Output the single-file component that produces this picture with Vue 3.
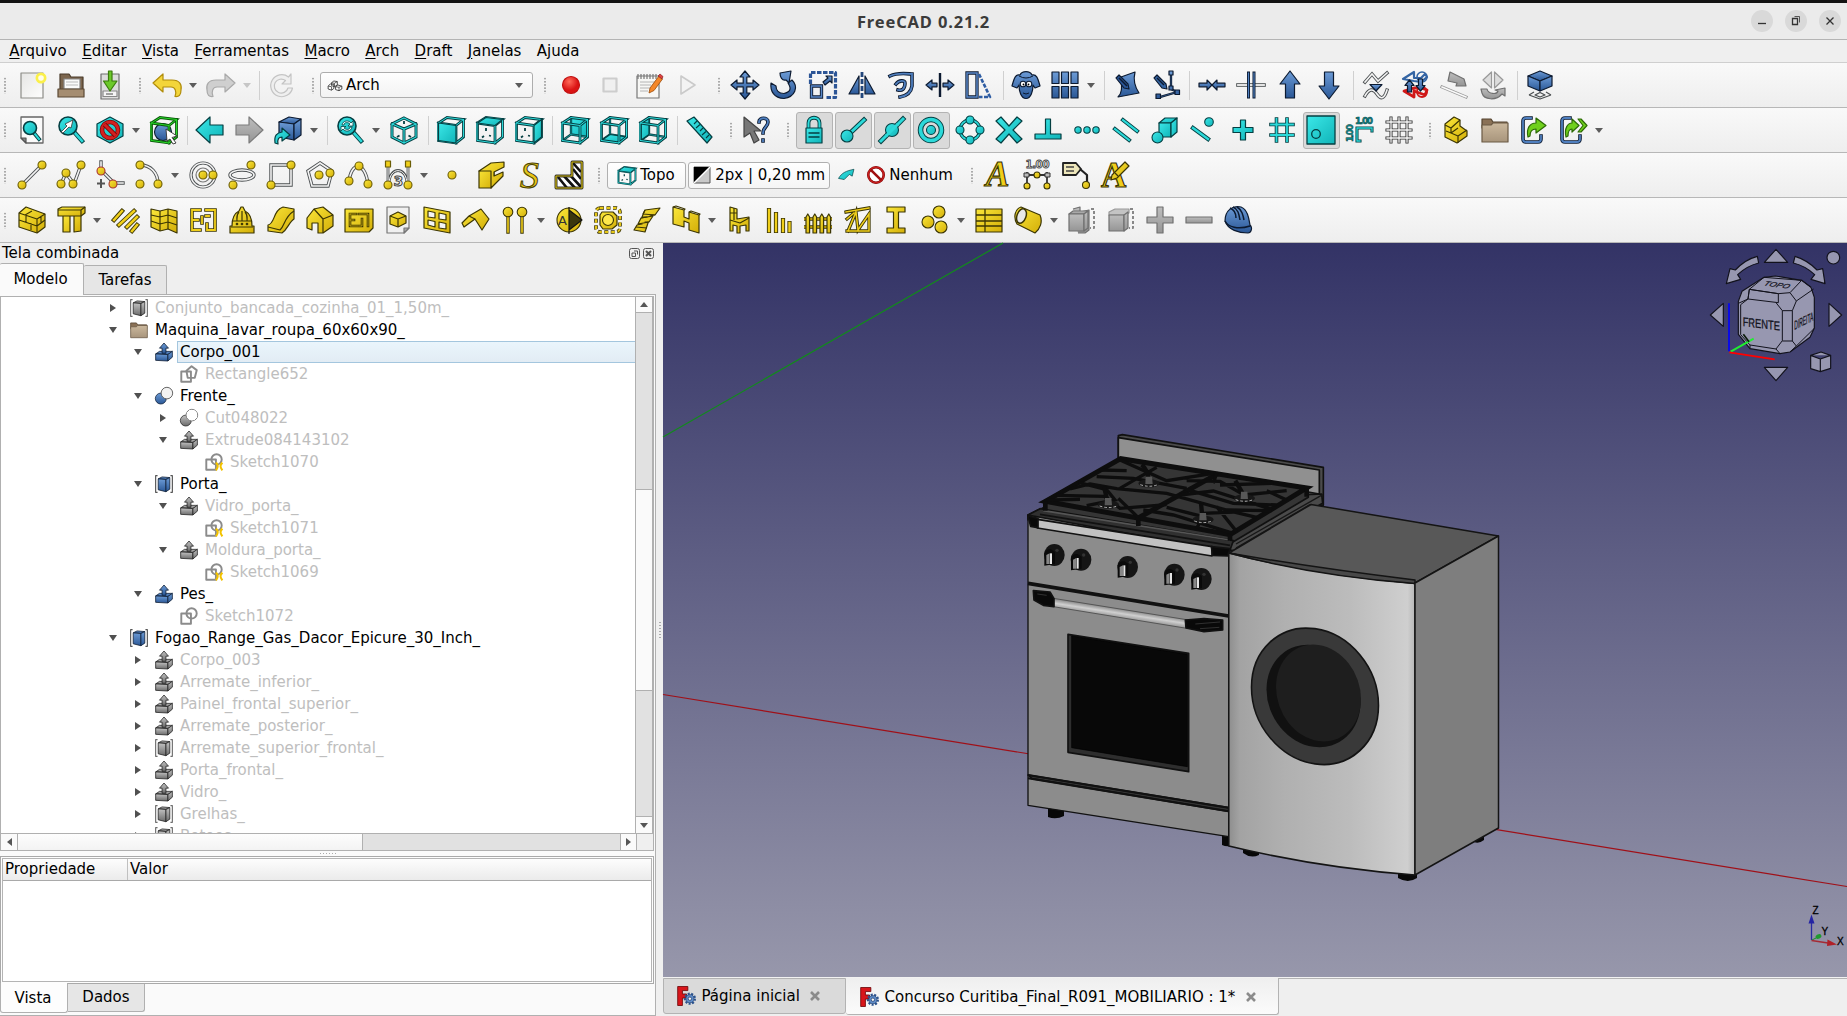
<script setup>
const p = (d, fill = 'none', stroke = 'none', w = 1.2) =>
  `<path d="${d}" fill="${fill}" stroke="${stroke}" stroke-width="${w}" stroke-linejoin="round"/>`
const tube = (d, c, o, w = 1.8) =>
  `<path d="${d}" fill="none" stroke="${o}" stroke-width="${w + 1.8}" stroke-linecap="square"/><path d="${d}" fill="none" stroke="${c}" stroke-width="${w}" stroke-linecap="square"/>`
const c = (x, y, r, fill, stroke, w = 1.1) =>
  `<circle cx="${x}" cy="${y}" r="${r}" fill="${fill}" stroke="${stroke}" stroke-width="${w}"/>`
const TS = '#053f42', YS = '#3c3604', BS = '#0c1a30', GS = '#707070'
const t = (d) => p(d, 'url(#gt)', TS)
const y = (d) => p(d, 'url(#gy)', YS)
const b = (d) => p(d, 'url(#gb)', BS)
const g = (d) => p(d, 'url(#gg)', GS)
const tt = (d, w) => tube(d, '#2bd9d9', TS, w)
const wt = (d, w = 1.6) => tube(d, '#f4f4f4', '#4c5052', w)
const yn = (...pts) => pts.map(([a, e]) => c(a, e, 4, 'url(#gy)', '#6b5d05')).join('')
const txt = (s, x, yy, size, fill, extra = '') =>
  `<text x="${x}" y="${yy}" font-size="${size}" fill="${fill}" ${extra}>${s}</text>`

const FRONT = 'M1.5 7L19 9.5V27L1.5 24.5Z', TOP = 'M1.5 7L10 1.5L26.5 3.5L19 9.5Z', RIGHT = 'M19 9.5L26.5 3.5V21L19 27Z'
const BACK = 'M10 1.5L26.5 3.5V21L10 18.5Z', BOT = 'M1.5 24.5L10 18.5L26.5 21L19 27Z', LEFT = 'M1.5 7L10 1.5V18.5L1.5 24.5Z'
const WIRE = 'M1.5 7L19 9.5V27L1.5 24.5ZM1.5 7L10 1.5L26.5 3.5L19 9.5M26.5 3.5V21L19 27'
const ticks = p('M10 12v3M8 20l-2 1.500M13 19.500l2 .5', 'none', TS, 1.8)
const hidden = tt('M10 1.5V18.5L1.5 24.5M10 18.5L26.5 21', 0.5)
const dash = (s, d) => s.replace('/>', ` stroke-dasharray="${d}"/>`)
const pencil = (x, yy, col, st) => p(`M${x} ${yy}l3-3 9 9 1 5-5-1z`, col, st)

const icons = {
  new: p('M3 2H25V27H3Z', 'url(#gw)', '#8d8d88') + c(23, 7, 5.500, '#fbf04a', 'none') + c(23, 7, 2.800, '#fffde8', 'none'),
  open: p('M3 3H12L14 6H26V20H3Z', '#7b654d', '#4a3b2a') + p('M7 8H23V18H7Z', '#fafafa', '#888') + p('M9 11H21M9 14H21', 'none', '#bbb', 1) + p('M1 18H27V26H1Z', '#a58d71', '#5b4934'),
  save: p('M5 3H23V28H5Z', '#dcdcdc', '#6e6e6e') + p('M7 20H21V25.500H7Z', '#f4f4f4', '#888') + p('M10 23H17', 'none', '#666') + p('M12.500 0H16V10H21L14 20L7.500 10H12.500Z', '#6cc92a', '#3b7d0d'),
  undo: p('M0 12L10 3V9H19C27 9 29 14 28 19C28 24 26 26 22 25.500C24 20 22 16 18 16H10V21Z', '#f3d53a', '#b08c0a'),
  redo: p('M28 12L18 3V9H9C1 9-1 14 0 19C0 24 2 26 6 25.500C4 20 6 16 10 16H18V21Z', '#cfcfcf', '#a9a9a9'),
  refresh: p('M23 3V13H14L17.500 9.500A7 7 0 1 0 20 17H24.500A11 11 0 1 1 20.500 6Z', '#efefef', '#c4c4c4'),
  record: c(14, 14, 8.500, 'url(#gr)', '#c01010'),
  stop: p('M7.500 7.500H20.500V20.500H7.500Z', '#f0f0f0', '#cdcdcd', 2.200),
  macro: p('M2 5H24V27H2Z', '#f7f7f5', '#777') + p('M3 3V8M6 3V8M9 3V8M12 3V8M15 3V8M18 3V8M21 3V8', 'none', '#777', 1.200) + p('M5 11H20M5 14H16M5 17H15M5 20H13', 'none', '#b4b4b4', 1) + p('M15 17L24 5L27.500 8L19 19.500L14 22Z', '#f4872a', '#9a4a08', .8) + p('M23 5L25 3L28 5.500L27 8Z', '#e04040', '#822', .7),
  play: p('M7 5L21 14L7 23Z', '#f3f3f3', '#cacaca', 1.600),
  move: b('M14 0L19 6H15.800V12.200H22V9L28 14L22 19V15.800H15.800V22H19L14 28L9 22H12.200V15.800H6V19L0 14L6 9V12.200H12.200V6H9Z'),
  rotate: b('M10 2L21 0L19 12L16 9C12 10 10 6 10 2ZM22 9C29 16 25 26 14 27.500C4 27 0 20 1 12L6 15C6 20 9 22.500 14 22.500C20 21 22 18 18 12Z'),
  scale: dash(p('M1.500 13V1.500H26.500V26.500H16', 'none', '#2c5596', 3.200), '4.500 1.500') + tube('M2.500 15H12.500V26H2.500Z', '#5a88c8', BS, 1.500) + b('M14 11L19 7L17 5H23V12L21 10L16 14Z'),
  mirror: b('M11 5V23H1Z') + b('M17 5V23H27Z') + dash(p('M14 1V27', 'none', '#23477c', 2.800), '5 2'),
  offset: tube('M3 5C11 1 22 3 25 3V15C24 22 19 25 13 26M9 13C12 9 18 9 18 12C18 18 15 20 11 19', '#4f7fbf', BS, 1.800),
  trimex: p('M14 2V26', 'none', BS, 2.400) + b('M0 14L6 9V12.200H11V15.800H6V19ZM28 14L22 9V12.200H17V15.800H22V19Z'),
  stretch: tube('M2 2H12V26H2Z', '#5a88c8', BS, 1.500) + dash(p('M14 3L25 26H14', 'none', '#2d5ca3', 2.600), '4 1.500'),
  sheep: b('M8 4C3 3 2 8 0 15L5 17L7 14C7 20 9 27.500 14 27.500C19 27.500 21 20 21 14L23 17L28 15C26 8 25 3 20 4C18-.5 10-.5 8 4Z') + c(11, 13, 2.800, '#fff', BS) + c(17, 13, 2.800, '#fff', BS) + c(11.500, 13.500, .9, '#000', 'none') + c(16.500, 13.500, .9, '#000', 'none') + p('M11 22Q14 24 17 22M7 5Q14 9 21 5', 'none', BS, 1),
  array: [1, 10.500, 20].map((x) => b(`M${x} 1h7v11.500h-7zM${x} 15.500h7v11.500h-7z`)).join(''),
  dedit: b('M8 6L22 1C20 9 22 16 26 22L5 26C9 22 9 18 8 6Z') + pencil(3, 7, '#2a5596', BS) + p('M6 7l8 8', 'none', BS, 1.600),
  dsub: tube('M19 4V18L25 21L8 26', '#4f7fbf', BS, .5) + pencil(2, 7, '#3465a4', BS) + p('M5 7l7 7', 'none', BS, 1.400) + b('M17 0h4v4h-4zM17 15h4v4h-4zM23 19h4.500v4.500h-4.500zM4 23h4.500v4.500h-4.500z'),
  join: b('M9 9L14 14L9 19V15.800H1V12.200H9ZM19 9L14 14L19 19V15.800H27V12.200H19Z'),
  split: wt('M1 14H27', 1.800) + tube('M11.500 2V26M17 2V26', '#4f7fbf', BS, 1.200),
  up: b('M14 0L24 13H18.500V27H9.500V13H4Z'),
  down: b('M14 28L24 15H18.500V1H9.500V15H4Z'),
  w2d: wt('M3 11L10 3L16 10L25 2M3 25Q9 14 15 23T25 19') + b('M8 13.500H20L14 20Z'),
  shape2d: p('M2 8L13 1V7H20L24 3L26 6L20 11L13 10Z', 'none', '#3465a4', 2.200) + p('M3 20L13 26V20L24 24L26 19L20 17H13Z', 'none', '#d01818', 2.800) + c(21, 6, 5, 'none', '#3465a4', 1.600) + c(21, 21, 5, 'none', '#d01818', 1.800) + b('M8.500 9L13 14.500H10.500V21H6.500V14.500H4ZM19.500 20L24 14.500H21.500V8H17.500V14.500H15Z'),
  slope: g('M10 1L24 8L26 15L16 15L17 12L8 10Z') + tube('M2 16L26 26', '#fafafa', '#999', 1.400),
  flip: p('M12.500 1V17L4 9ZM15.500 1V17L24 9Z', '#dcdcdc', '#999') + g('M2 18H8C9 23 18 24 19 20L16 19L26 17V25L23 23C17 30 5 29 3 22Z'),
  wproxy: b('M2 5L14 0L26 5L14 10Z') + b('M2 5L14 10V20L2 15Z') + b('M14 10L26 5V15L14 20Z') + p('M3 24L8 21M25 24L20 21M3 24L14 28L25 24M9 24L14 21.500L19 24L14 26Z', 'none', '#4c5052', 1.200),
  fitall: p('M3 1H25V27H8L3 22Z', '#fafafa', '#666', 1.300) + p('M3 22H8V27Z', '#888', '#555') + tt('M16 17L21 23', 2) + c(12, 12, 6.500, 'url(#gt)', TS, 1.600),
  fitsel: tt('M18 17L25 25', 2.600) + c(11, 10, 9, 'url(#gt)', TS, 1.600) + p('M4 16L10 10L8 8L16 4L14 12L12 11L6 17Z', '#fff', '#333', .8),
  nodraw: t('M14 1L27 8V20L14 27L1 20V8Z') + c(14, 14, 8, 'none', '#7a0808', 4.600) + c(14, 14, 8, 'none', '#d42020', 3) + p('M8.500 8.500L19.500 19.500', 'none', '#7a0808', 4.600) + p('M8.500 8.500L19.500 19.500', 'none', '#d42020', 3),
  selbox: c(13, 16, 8.500, 'url(#gb)', BS) + tube(WIRE, '#28d828', '#0a5a0a', 1) + p('M16 13L27 20L22 21.500L26 27L23 28L20 23L17 25Z', '#fff', '#333', .9),
  left: t('M0 14L14 1V9H27V19H14V27Z'),
  right: p('M28 14L14 1V9H1V19H14V27Z', 'url(#gg)', '#7c7c7c'),
  link: b('M5 6L15 1L27 3L20 8Z') + b('M5 6L20 8V24L5 21Z') + b('M20 8L27 3V19L20 24Z') + t('M1 27C0 19 3 17 8 16V12L16 19L8 25V21C5 21 3 23 4 28Z'),
  zoom: tt('M18 17L25 25', 2.600) + c(11, 10, 9, 'url(#gt)', TS, 1.600) + p('M6 9C7 4 13 4 15 7L17 5V10H12L14 8C12 6 8 6 8 9ZM16 11C15 16 9 16 7 13L5 15V10.500H10L8 12C10 14 14 14 14 11Z', '#e9ffff', TS, .8),
  iso: tt('M14 2L26 8V21L14 27L2 21V8ZM2 8L14 13L26 8M14 13V27', 1.200) + p('M14 5V8M7 21l2.500-1.500M21 21l-2.500-1.500', 'none', TS, 1.800),
  vfront: tt(WIRE, 1) + t(FRONT), vtop: tt(WIRE, 1) + t(TOP) + ticks, vright: tt(WIRE, 1) + t(RIGHT) + ticks,
  vrear: t(BACK) + hidden + tt(WIRE, 1), vbottom: hidden + t(BOT) + tt(WIRE, 1), vleft: hidden + t(LEFT) + tt(WIRE, 1),
  ruler: t('M1 5L8 1L26 21L21 27Z') + p('M11 5L8 8M14 8.500L10 12M17 12L14 15M20 15.500L16 19M23 19L20 22', 'none', TS, 1.100),
  what: p('M1 1L18 15H11L16 24L11 27L7 17L1 21Z', '#777', '#444') + tube('M16 6C16 1 25 1 25 6C25 11 20 11 20 17M20 24V25', '#4f7fbf', BS, 1.800),
  lock: tt('M8.500 13V7C8.500 0 19.500 0 19.500 7V13', 2) + t('M6 12H22V27H6Z') + p('M8.500 17H19.500M8.500 21H19.500', 'none', TS, 1.300),
  send: tt('M8 20L25 4', 3) + c(8, 20, 6, 'url(#gt)', TS),
  smid: tt('M3 25L25 3', 3) + c(14, 14, 6.500, 'url(#gt)', TS) + p('M8 20L20 8', 'none', '#2bd9d9', 3),
  scenter: c(14, 14, 10.500, 'none', TS, 5.500) + c(14, 14, 10.500, 'none', '#2bd9d9', 3.600) + c(14, 14, 4.500, 'url(#gt)', TS),
  sangle: c(14, 14, 10, 'none', TS, 3.400) + c(14, 14, 10, 'none', '#2bd9d9', 1.600) + [[14, 4], [24, 14], [14, 24], [4, 14]].map(([a, e]) => c(a, e, 4, 'url(#gt)', TS)).join(''),
  sint: t('M1 5L6 1L14 10L22 1L27 5L18 14L27 23L22 27L14 18L6 27L1 23L10 14Z'),
  sperp: t('M11.500 3H16.500V18H27V23H1V18H11.500Z'),
  sext: c(5, 14, 3.200, 'url(#gt)', TS) + c(14, 14, 3.200, 'url(#gt)', TS) + c(23, 14, 3.200, 'url(#gt)', TS),
  spar: tt('M3 13L17 24M11 4L25 15', 2.200),
  sspecial: t('M8 7L14 2L26 2L20 7Z') + t('M8 7H20V21H8Z') + t('M20 7L26 2V16L20 21Z') + c(6.500, 21.500, 5.500, 'url(#gt)', TS),
  snear: tt('M3 12L18 23', 2.400) + c(19, 6, 4.300, 'url(#gt)', TS),
  sortho: t('M11.500 4H16.500V11.500H24V16.500H16.500V24H11.500V16.500H4V11.500H11.500Z'),
  sgrid: tt('M8.500 3V25M19 3V25M3 8.500H25M3 19H25', 1.800),
  swp: p('M0 0H28V28H0Z', 'url(#gt)', TS, 1.300) + c(9, 18, 4.300, 'none', TS, 1.300),
  sdim: txt('1.00', 9, 8, 9, '#0a8a8a', 'font-weight="700" stroke="#053f42" stroke-width=".5" textLength="18"') + txt('1.00', -26, 7, 9, '#0a8a8a', 'font-weight="700" transform="rotate(-90)" stroke="#053f42" stroke-width=".5" textLength="18"') + tt('M11 25V12H26M11 25H14M26 12V15', 1.300),
  grid: tube('M6 2V26M14 2V26M22 2V26M2 6H26M2 14H26M2 22H26', '#f8f8f8', '#333', 1.300),
  part: y('M3 14V8L12 1L18 4V10L25 15V20L15 27L3 21Z') + p('M3 9L9 12L18 4M9 12V17M9 17L16 20L25 14M16 20V27M4 15L9 17L16 12', 'none', YS),
  folder: p('M1 3H10L12 6H26V12H1Z', '#8a7156', '#54432f') + p('M1 9H10L12 7H27V26H1Z', 'url(#gf)', '#6b5a45'),
  mlink: tube('M11 2H6Q3 2 3 5V23Q3 26 6 26H18Q21 26 21 23V20', '#4f7fbf', BS, 1.800) + p('M8 21C6 12 10 7 16 7V2L26 9.500L16 17V13C12 13 10 16 10 20Z', '#6fd01c', '#2c6a05'),
  mlinks: tube('M11 2H6Q3 2 3 5V23Q3 26 6 26H18Q21 26 21 23V20', '#4f7fbf', BS, 1.800) + p('M7 21C5 12 9 7 13 7V3L20 9.500L13 16V13C10 13 9 16 9 20ZM19 3H22L28 9.500L22 16H19L24 9.500Z', '#6fd01c', '#2c6a05'),
  line: wt('M4 24L24 4') + yn([4, 24], [24, 4]),
  wire: wt('M4 23L9 12L17 23L24 4') + yn([4, 23], [9, 12], [16, 23], [24, 4]),
  fillet: wt('M5 1V9L18 22H27') + p('M5 18V27M1 22.500H9', 'none', '#555', 2) + c(5, 10, 4, 'url(#gy)', '#a33') + c(17, 23, 4, 'url(#gy)', '#a33'),
  arc: wt('M5 4C16 4 23 12 23 23') + yn([5, 4], [23, 23], [5, 23]),
  circle: c(14, 14, 12, 'none', '#4c5052', 3.200) + c(14, 14, 12, 'none', '#f4f4f4', 1.500) + c(14, 14, 7, 'none', '#777', 1.200) + yn([14, 14], [24, 14]),
  ellipse: '<ellipse cx="14" cy="14" rx="12" ry="5" fill="none" stroke="#4c5052" stroke-width="3.400"/><ellipse cx="14" cy="14" rx="12" ry="5" fill="none" stroke="#f4f4f4" stroke-width="1.500"/>' + yn([5, 24], [23, 4]),
  rect: wt('M4 4H24V24H4Z') + yn([4, 24], [24, 4]),
  polygon: wt('M14 2L26 10L22 25H6L2 10Z') + yn([13, 14], [24, 12]),
  bspline: wt('M4 21C6 0 20 0 23 23') + yn([14, 5], [4, 20], [23, 23]),
  bezier: wt('M5 23C5 5 23 5 23 23M4 3V20M24 3V20', 1) + p('M1.500 0h5v6h-5zM21.500 0h5v6h-5z', '#f0cf1b', '#6b5d05') + yn([4, 24], [24, 24]) + txt('3', 9.500, 25, 14, '#f4f4f4', 'font-weight="700" stroke="#444" stroke-width="1"'),
  point: yn([14, 14]),
  facebinder: y('M2 10L17 6V22L14 27H2Z') + y('M2 10L14 2L27 1V6L17 11V15L26 11V15L14 27V10Z'),
  sstring: '<text x="4" y="27" font-size="38" font-style="italic" font-family="Liberation Serif,serif" fill="#e5c51a" stroke="#4a4205" stroke-width="1">S</text>',
  hatch: p('M17 1H27V27H1V15H17Z', '#fff', '#222', 2.400) + p('M3 16L12 27M9 15L20 27M15 14L26 26M18 8L26 18M18 2L26 11', 'none', '#111', 2.600) + p('M17 1H27V27H1V15H17Z', 'none', '#222', 2.600) + p('M17 1H27V27H1V15H17Z', 'none', '#d9c010', 1.200),
  textA: '<text x="2" y="25" font-size="35" font-weight="700" font-style="italic" font-family="Liberation Serif,serif" fill="#f0cf1b" stroke="#3c3604" stroke-width="1.200">A</text>',
  dimension: txt('1.00', 2.500, 6.500, 10.500, '#f4f4f4', 'font-weight="700" stroke="#444" stroke-width=".9" textLength="24"') + p('M4 14H24M4 11V25M24 11V25', 'none', '#333', 1.800) + p('M1 12h5v4h-5zM22 12h5v4h-5z', '#bbb', '#333', 1) + c(14, 14, 3, 'url(#gy)', YS) + c(4, 25, 3, 'url(#gy)', YS) + c(24, 25, 3, 'url(#gy)', YS),
  label: p('M1 2H14L19 8L14 14H1Z', '#eee7bb', '#222', 1.800) + p('M4 6H12M4 10H12', 'none', '#444', 1.400) + p('M18 8L25 14V24', 'none', '#222', 2.200) + c(24, 24, 3.500, 'url(#gy)', YS),
  astyle: '<text x="0" y="26" font-size="35" font-weight="700" font-family="Liberation Serif,serif" fill="#f0cf1b" stroke="#3c3604" stroke-width="1.200">A</text>' + y('M11 14L24 1L28 5L16 17L10 19Z') + p('M14 12L17 15', 'none', YS),
  wall: y('M1 7L8 1L27 8V21L19 27L1 21Z') + p('M1 7L19 13L27 8M19 13V27M1 14L19 20L27 14M8 10V16M13 17V24M14 5L7 9M23 11V17', 'none', YS, 1.100),
  struct: y('M6 9H13V26H6ZM17 9H24V25L17 26Z') + y('M1 3L5 1H28V7L24 10H1Z') + p('M1 4H24V10M24 4L28 1', 'none', YS),
  rebar: tube('M3 14L11 5M8 19L23 5M16 21L26 11M21 25L26 19', '#f0cf1b', YS, 2.600),
  curtain: y('M1 3L10 5L18 3L27 5V27L18 23L10 25L1 21Z') + p('M10 5V25M18 3V23M1 9L10 11L18 9L27 12M1 15L10 18L18 16L27 19', 'none', YS),
  plan: tube('M11 4H3V24H11M3 14H9M17 4H26V24H18V18M17 10H20M13 11V17', '#f0cf1b', YS, 1.800),
  dome: y('M13 1H15L17 5C23 8 24 14 24 20H26V27H2V20H4C4 14 5 8 11 5Z') + p('M5 15H23M3 21H25M11 6C8 9 9 12 9 15M17 6C20 9 19 12 19 15M14 5V15', 'none', YS) + c(9, 18, .8, YS, YS) + c(14, 18, .8, YS, YS) + c(19, 18, .8, YS, YS),
  ref: y('M1 19C8 18 6 4 16 1L27 3V13C22 16 21 23 15 27L1 25Z') + p('M1 21L13 24C18 20 17 11 27 5', 'none', YS),
  building: y('M1 12L8 3L17 1L27 9V20L17 27H12V17H6V24L1 22Z') + p('M8 3L17 13V27M17 13L27 9', 'none', YS),
  floor: y('M0 3H28V22L24 26H0Z') + tube('M5 8H11M5 8V20H13M5 14H9M14 8H23V20M17 13V20H14', '#d9b90f', YS, .8),
  bimfile: p('M3 1H25V22L20 27H3Z', '#f0f0f0', '#777') + p('M20 27V22H25Z', '#aaa', '#777') + y('M6 10L14 6L22 10V17L14 21L6 18Z') + p('M6 10L14 13L22 10M14 13V21', 'none', YS),
  window: y('M1 1L27 6V27L1 22Z') + p('M5 5L12 6.500V12L5 11ZM16 7L23 8.500V14L16 13ZM5 14L12 15.500V21L5 19ZM16 16L23 17.500V23L16 22Z', '#f5f5f5', YS),
  roof: y('M0 17L7 10L19 3L27 13L20 24L13 13L2 21Z') + p('M7 10L13 13', 'none', YS),
  axis: tube('M7 9V26M21 9V26', '#f0cf1b', YS, 1.600) + c(7, 6, 4.800, 'url(#gy)', YS) + c(21, 6, 4.800, 'url(#gy)', YS),
  section: c(14, 14, 12, 'url(#gy)', YS) + p('M14 1V28M14 4L27 14L14 24Z', '#3b370d', '#111') + txt('A', 3, 19, 13, '#333'),
  space: `<rect x="2" y="2" width="24" height="24" rx="4" fill="none" stroke="${YS}" stroke-width="3.600" stroke-dasharray="4 2.500"/><rect x="2" y="2" width="24" height="24" rx="4" fill="none" stroke="#e5c615" stroke-width="2" stroke-dasharray="3.500 3"/>` + y('M6 19V9L8 6H19L23 10V19L18 23H9Z') + c(14, 14, 5.500, '#ffe84c', YS),
  stairs: y('M12 4L27 2L22 9H17L20 10L16 16H12L15 17L12 26L1 24L4 19L9 18H5L8 12L14 11H9Z') + p('M12 4L10 8L22 9M8 12L20 10M5 18L16 16M3 21L14 22', 'none', YS),
  panel: y('M1 1L12 4V11L17 13V6L27 9V27L17 24V17L12 15V21L1 18Z') + p('M1 1L4 0L13 3L12 4M17 6L19 5L28 8L27 9', 'none', YS),
  chair: y('M4 1L11 3V13L23 11V25H20V19L14 20V27H11V20L7 19V25H4Z') + p('M4 14L14 17L23 12M8 2V14M4 7H11', 'none', YS),
  pipes: tube('M4 4V25M11 8V25M18 14V25M24.500 17V25', '#f0cf1b', YS, 2.400),
  fence: p('M0 13H28M0 21H28', 'none', YS, 3.400) + p('M0 13H28M0 21H28', 'none', '#e0c010', 1.600) + [2, 9, 16, 23].map((x) => y(`M${x} 27V11l1.800-3l1.800 3V27z`)).join(''),
  truss: tube('M3 6L26 2M4 25H26M5 25L13 6L15 24L26 8V25M4 13L11 7', '#f0cf1b', YS, 1.500),
  profile: y('M5 1H23V6H16.500V22H23V27H5V22H11.500V6H5Z'),
  material: c(18, 6, 6, 'url(#gy)', YS) + c(7, 16, 6, 'url(#gy)', YS) + c(20, 21, 6, 'url(#gy)', YS),
  schedule: y('M1 3H27V26H1Z') + p('M1 9H27M1 15H27M1 20H27M10 3V26', 'none', YS, 1.300),
  pipe: y('M7 1L26 9C29 16 26 23 21 27L3 18C-1 11 1 3 7 1Z') + '<ellipse cx="7.500" cy="10" rx="4.500" ry="7.500" transform="rotate(20 7.500 10)" fill="#e8e8e8" stroke="#3c3604" stroke-width="1.500"/>',
  cut1: g('M5 3L12 1V6L21 4V24L17 27H10') + g('M1 8L5 5H20L16 8Z') + g('M1 8H16V25H1Z') + g('M16 8L20 5V22L16 25Z') + dash(p('M23 3H26V22H22', 'none', '#888', 2), '3 2'),
  cut2: p('M2 6L8 3H22V7L17 9H2Z', '#c4c4c4', '#999') + g('M2 9H17V25H2Z') + g('M17 9L21 6V22L17 25Z') + dash(p('M23 3H26V22H22', 'none', '#888', 2), '3 2'),
  add: g('M11 1H17V11H27V17H17V27H11V17H1V11H11Z'),
  remove: g('M1 11H27V17H1Z'),
  helmet: b('M1 15C1 4 9-1 17 1C24 4 25 13 26 19C29 22 27 27 24 27C15 27 4 24 1 15Z') + p('M1 15C4 21 14 24 26 20M9 1C14 3 15 8 16 14M13 1C18 4 19 9 20 14M6 2C11 4 12 8 12 12', 'none', BS, 1.500),
  arch: p('M2 16L6 12L12 13V20L8 23L2 21ZM8 10L12 7L18 8V14L13 17L8 15ZM15 17L19 14L26 16V21L21 24L15 22Z', '#fff', '#333', 1.500) + p('M2 16L8 17V23M8 10L13 11V17M13 11L18 8M15 17L21 18V24M21 18L26 16', 'none', '#333', 1.300),
  wpdir: t('M0 20C6 10 13 7 27 4L24 16L19 13L10 22Z'),
  none: c(14, 14, 12, '#fff', '#7a0808', 4) + c(14, 14, 12, 'none', '#c81e1e', 2.500) + p('M5.500 5.500L22.500 22.500', 'none', '#a01010', 4),
  extrude: b('M1 17L7 13L27 13L20 18Z') + b('M1 17L20 18V28L1 27Z') + b('M20 18L27 13V22L20 28Z') + b('M14 0L21 8H17V16H11V8H7Z'),
  cut: c(9, 18, 8.500, 'url(#gb)', BS) + c(18.500, 9.500, 9, '#f2f2f2', '#555', 1.400),
  compound: b('M5 6L11 3L23 4L17 7Z') + b('M5 6L17 7V26L5 23Z') + b('M17 7L23 4V22L17 26Z') + p('M4 1H1V27H4M24 1H27V27H24', 'none', '#555', 1.800),
  rectangle: p('M2 10H17V26H2Z', 'none', '#8b8b8b', 3) + p('M10 9L18 2L26 8L23 20H12Z', 'none', '#8b8b8b', 3),
  sketchp: p('M2 10H17V26H2Z', 'none', '#8b8b8b', 3) + c(18, 10, 8, 'none', '#8b8b8b', 3),
  logo: p('M1 0H16V6H8V11H14V17H8V28H1Z', '#d8161b', '#6a0507', 1.200) + dash(c(19, 18, 7.500, 'none', '#2c5490', 3), '3 2.200') + c(19, 18, 6, '#5f8cc8', '#1d3c6e') + c(19, 18, 2.500, '#f5f5f5', '#1d3c6e')
}
icons.sketch = icons.sketchp + p('M17 15C21 19 21 22 17 27M27 15C23 19 23 22 27 27', 'none', '#f2c200', 3.400)

const parse = (s) => s.trim().split(/\s+/).map((w) => {
  if (w === '|') return { k: 'grip' }
  if (w === '/') return { k: 'sep' }
  if (w[0] === '#') return { k: w.slice(1) }
  return { k: 'btn', n: w.replace(/[>*~]/g, ''), caret: w.includes('>'), pale: w.includes('~'), on: w.includes('*') }
})
const bars = [
  '| new open save | undo> redo>~ / refresh | #combo | record stop macro play | move rotate scale mirror offset trimex stretch / sheep array> / dedit dsub / join split up down / w2d shape2d slope flip / wproxy',
  '| fitall fitsel nodraw> selbox / left right link> / zoom> iso / vfront vtop vright / vrear vbottom vleft / ruler | what | lock* send* smid* scenter* sangle sint sperp sext spar sspecial snear sortho sgrid swp* sdim grid | part folder mlink mlinks>',
  '| line wire fillet arc> circle ellipse rect polygon bspline bezier> point facebinder sstring hatch | #tray | textA dimension label astyle',
  '| wall struct> rebar curtain plan dome ref building floor bimfile window roof axis> section space stairs panel> chair pipes fence truss profile material> schedule pipe> cut1 cut2 add remove helmet'
].map(parse)

const menus = ['_Arquivo', '_Editar', '_Vista', '_Ferramentas', '_Macro', '_Arch', '_Draft', '_Janelas', 'Ajuda'].map((m) => (m[0] === '_' ? { u: m[1], r: m.slice(2) } : { u: '', r: m }))

const rows = [
  [0, 'r', 'compound', 'Conjunto_bancada_cozinha_01_1,50m_', 1],
  [0, 'd', 'folder', 'Maquina_lavar_roupa_60x60x90_', 0],
  [1, 'd', 'extrude', 'Corpo_001', 0, 1],
  [2, '', 'rectangle', 'Rectangle652', 1],
  [1, 'd', 'cut', 'Frente_', 0],
  [2, 'r', 'cut', 'Cut048022', 1],
  [2, 'd', 'extrude', 'Extrude084143102', 1],
  [3, '', 'sketch', 'Sketch1070', 1],
  [1, 'd', 'compound', 'Porta_', 0],
  [2, 'd', 'extrude', 'Vidro_porta_', 1],
  [3, '', 'sketch', 'Sketch1071', 1],
  [2, 'd', 'extrude', 'Moldura_porta_', 1],
  [3, '', 'sketch', 'Sketch1069', 1],
  [1, 'd', 'extrude', 'Pes_', 0],
  [2, '', 'sketchp', 'Sketch1072', 1],
  [0, 'd', 'compound', 'Fogao_Range_Gas_Dacor_Epicure_30_Inch_', 0],
  [1, 'r', 'extrude', 'Corpo_003', 1],
  [1, 'r', 'extrude', 'Arremate_inferior_', 1],
  [1, 'r', 'extrude', 'Painel_frontal_superior_', 1],
  [1, 'r', 'extrude', 'Arremate_posterior_', 1],
  [1, 'r', 'compound', 'Arremate_superior_frontal_', 1],
  [1, 'r', 'extrude', 'Porta_frontal_', 1],
  [1, 'r', 'extrude', 'Vidro_', 1],
  [1, 'r', 'compound', 'Grelhas_', 1],
  [1, 'r', 'compound', 'Botoes_', 1]
].map(([lv, arrow, icon, text, off, sel]) => ({ lv, arrow, icon, text, off, sel }))
const tintable = ['compound', 'extrude', 'cut']

const knobs = [[163, 405], [243, 419], [383, 441], [523, 464], [604, 477]]
const burners = [[447, 183], [325, 247], [733, 228], [609, 292]]
</script>

<template>
  <svg class="defs" width="0" height="0">
    <defs>
      <linearGradient id="gt" x1="0" y1="0" x2="1" y2="1"><stop offset="0" stop-color="#3be8e8" /><stop offset="1" stop-color="#10b4b8" /></linearGradient>
      <linearGradient id="gy" x1="0" y1="0" x2="1" y2="1"><stop offset="0" stop-color="#fbe73a" /><stop offset="1" stop-color="#d3ae08" /></linearGradient>
      <linearGradient id="gb" x1="0" y1="0" x2="0" y2="1"><stop offset="0" stop-color="#6c9bd6" /><stop offset="1" stop-color="#2a5796" /></linearGradient>
      <linearGradient id="gg" x1="0" y1="0" x2="0" y2="1"><stop offset="0" stop-color="#bdbdbd" /><stop offset="1" stop-color="#959595" /></linearGradient>
      <linearGradient id="gw" x1="0" y1="0" x2="1" y2="1"><stop offset="0" stop-color="#e6e6e4" /><stop offset="1" stop-color="#fdfdfd" /></linearGradient>
      <linearGradient id="gf" x1="0" y1="0" x2="0" y2="1"><stop offset="0" stop-color="#cbb89d" /><stop offset="1" stop-color="#a8957c" /></linearGradient>
      <radialGradient id="gr" cx=".4" cy=".3"><stop offset="0" stop-color="#ff6a5a" /><stop offset="1" stop-color="#db1414" /></radialGradient>
    </defs>
  </svg>
  <div class="app">
    <header class="title">
      <span class="name">FreeCAD 0.21.2</span>
      <div class="winbtns">
        <svg viewBox="0 0 22 22"><circle cx="11" cy="11" r="11" /><path d="M7 13.500H15" /></svg>
        <svg viewBox="0 0 22 22"><circle cx="11" cy="11" r="11" /><path d="M7.500 8.500h5v6h-5z" /><path class="thin" d="M9.500 6.500h5v6" /></svg>
        <svg viewBox="0 0 22 22"><circle cx="11" cy="11" r="11" /><path d="M7.500 7.500l7 7M14.500 7.500l-7 7" /></svg>
      </div>
    </header>
    <nav class="menu"><span v-for="m in menus" :key="m.u + m.r"><u>{{ m.u }}</u>{{ m.r }}</span></nav>

    <div v-for="(bar, i) in bars" :key="i" class="bar">
      <template v-for="(it, j) in bar" :key="j">
        <i v-if="it.k === 'grip'" class="grip"></i>
        <i v-else-if="it.k === 'sep'" class="sep"></i>
        <div v-else-if="it.k === 'combo'" class="combo">
          <svg viewBox="0 0 28 28" class="i16" v-html="icons.arch"></svg><span>Arch</span><i class="caret"></i>
        </div>
        <div v-else-if="it.k === 'tray'" class="tray">
          <div class="tbtn topo"><svg viewBox="0 0 28 28" v-html="icons.vtop"></svg>Topo</div>
          <div class="tbtn px"><svg viewBox="0 0 16 16" class="sw"><path d="M0 0H16V16H0Z" fill="#c9c9c9" stroke="#555" /><path d="M0 0H16L0 16Z" /><path d="M0 16L16 0" stroke="#fff" stroke-width="1.500" /></svg>2px | 0,20 mm</div>
          <svg viewBox="0 0 28 28" class="dir" v-html="icons.wpdir"></svg>
          <svg viewBox="0 0 28 28" class="non" v-html="icons.none"></svg><span>Nenhum</span>
        </div>
        <template v-else>
          <div class="btn" :class="{ on: it.on }"><svg viewBox="0 0 28 28" v-html="icons[it.n]"></svg></div>
          <span v-if="it.caret" class="cc"><i class="caret" :class="{ pale: it.pale }"></i></span>
        </template>
      </template>
    </div>

    <main>
      <aside>
        <div class="dock"><span>Tela combinada</span>
          <div class="dbtns">
            <svg viewBox="0 0 11 11"><rect x=".5" y=".5" width="10" height="10" rx="2" /><path d="M3 5h3.500v3.500H3zM5 3h3.500v3.500" /></svg>
            <svg viewBox="0 0 11 11"><rect x=".5" y=".5" width="10" height="10" rx="2" /><path d="M3 3l5 5M8 3l-5 5" stroke-width="2" /></svg>
          </div>
        </div>
        <div class="tabs"><div class="tab act">Modelo</div><div class="tab">Tarefas</div></div>
        <div class="page">
          <div class="tree">
            <div class="rows">
              <div v-for="(r, i) in rows" :key="i" class="row" :class="['lv' + r.lv, { off: r.off, sel: r.sel }]">
                <i class="arr" :class="r.arrow"></i>
                <svg viewBox="0 0 28 28" :class="{ gray: r.off && tintable.includes(r.icon) }" v-html="icons[r.icon]"></svg>
                <span class="lab">{{ r.text }}</span>
              </div>
            </div>
            <div class="vsb"><b class="sb"><i class="au"></i></b><b class="vt1"></b><b class="vh"></b><b class="vt2"></b><b class="sb bt"><i class="ad"></i></b></div>
          </div>
          <div class="hsb"><b class="hb"><i class="al"></i></b><b class="hh"></b><b class="ht"></b><b class="hb lf"><i class="ar"></i></b><b class="corner"></b></div>
          <div class="split"></div>
          <div class="props"><div class="inner"><div class="hd"><span class="c1">Propriedade</span><span>Valor</span></div></div></div>
          <div class="btabs"><div class="bt1">Vista</div><div class="bt2">Dados</div></div>
        </div>
      </aside>
      <div class="vsplit"><i></i></div>
      <section>
        <svg class="view" viewBox="663 243 1184 734" width="1184" height="734">
          <defs>
            <linearGradient id="bg" x1="0" y1="0" x2="0" y2="1"><stop offset="0" stop-color="#333366" /><stop offset="1" stop-color="#9797ab" /></linearGradient>
            <linearGradient id="front" x1="0" y1="0" x2="1" y2="0"><stop offset="0" stop-color="#8e8e8e" /><stop offset=".06" stop-color="#a3a3a3" /><stop offset=".3" stop-color="#b0b0b0" /><stop offset=".65" stop-color="#bcbcbc" /><stop offset=".96" stop-color="#cfcfcf" /><stop offset="1" stop-color="#b6b6b6" /></linearGradient>
            <linearGradient id="rod" gradientUnits="userSpaceOnUse" x1="362" y1="567" x2="358" y2="593"><stop offset="0" stop-color="#8a8a8a" /><stop offset=".5" stop-color="#d0d0d0" /><stop offset="1" stop-color="#999" /></linearGradient>
          </defs>
          <rect x="663" y="243" width="1184" height="734" fill="url(#bg)" />
          <path d="M663 437L1003 243" stroke="#128a1c" stroke-width="1.200" />
          <path d="M663 694.500L1847 886.500" stroke="#a01018" stroke-width="1.200" />

          <g fill="#080808"><path d="M1048 806h16v10q-8 4-16 1zM1222 834h9v12q-5 1-9-1zM1243 848h16v7q-8 4-16-2zM1398 872h19v6q-9 6-19 0zM1474 838l10-4v6q-5 4-10 2z" /></g>
          <g transform="translate(1000 420) scale(.33333)" stroke="#111" stroke-width="5" stroke-linejoin="round">
            <path d="M355 47L367 44L970 142V256L930 254L355 120Z" fill="#4b4b4b" />
            <path d="M355 53L958 150V222L355 114Z" fill="#909090" />
            <path d="M84 285L130 263L965 222L968 250L700 392L84 300Z" fill="#4a4a4a" />
            <path d="M130 244L362 114L924 202L925 232L700 365L688 360L136 276Z" fill="#353535" />
            <path d="M84 285L690 372L686 396V1250L84 1156Z" fill="#8c8c8c" stroke-width="4" />
            <path d="M84 285L120 266L700 362L688 396Z" fill="#303030" />
            <path d="M130 272L690 360" stroke="#555" stroke-width="5" />
            <path d="M120 283L690 376" />
            <path d="M112 298L636 380V408L112 324Z" fill="#c2c2c2" />
            <path d="M84 288L114 295V323L92 319ZM634 380L690 386L683 408L638 406Z" fill="#090909" />
            <path d="M708 372L968 224M708 384L930 254" stroke="#171717" stroke-width="4" fill="none" />
            <g fill="none" stroke="#0d0d0d" stroke-width="10" stroke-linejoin="miter">
              <path d="M136 244L362 116L920 204L690 344ZM415 294L655 160" stroke-width="15" />
              <path d="M210 207L270 192L350 206L500 220L680 270L815 272M290 170L400 175L560 205M150 240L240 238M170 226L315 229L360 265L500 254M235 187L320 209L345 240L260 257M300 150L380 152M360 120L500 182L640 160M470 142L410 176L360 205M355 235L415 293M560 182L660 184L733 225L860 212M650 160L640 190M540 225L640 213L815 268M550 205L700 250L830 255M609 280L700 276L770 292M430 270L520 285L700 340M820 190L660 195M800 212L860 240M500 262L609 290L590 325M650 260L710 335" />
              <path d="M425 134Q444 150 445 180M312 200L322 242M706 182L730 224M603 250L607 290" stroke-width="13" />
              <path d="M136 244V272M415 294V318M690 344V362M920 204V230" stroke-width="14" />
            </g>
            <g v-for="(q, i) in burners" :key="i" stroke="none">
              <ellipse :cx="q[0]" :cy="q[1] + 7" rx="32" ry="12" fill="#171717" />
              <path :d="`M${q[0] - 10} ${q[1] - 13}h19l2 22h-22z`" fill="#585858" />
              <path :d="`M${q[0] - 26} ${q[1] + 11}q26 9 50 1`" fill="none" stroke="#cfcfcf" stroke-width="2.500" stroke-dasharray="8 6" />
            </g>
            <g v-for="(q, i) in knobs" :key="'k' + i" stroke="none">
              <ellipse :cx="q[0]" :cy="q[1]" rx="31" ry="33" fill="#151515" />
              <circle :cx="q[0] + 8" :cy="q[1] - 14" r="5" fill="#333" />
              <path :d="`M${q[0] - 30} ${q[1] - 5}q6-14 20-12l12 8v36l-32 5z`" fill="#0a0a0a" />
              <path :d="`M${q[0] - 24} ${q[1]}l10-5v32h-10z`" fill="#878787" />
              <path :d="`M${q[0] - 13} ${q[1] - 5}l6 0v32h-6z`" fill="#e5e5e5" />
            </g>
            <path d="M84 490L686 588" stroke-width="11" />
            <path d="M160 535L560 599V625L160 560Z" fill="url(#rod)" stroke="#555" stroke-width="3" />
            <path d="M100 512L150 516L162 536V560L130 556L102 540ZM556 600L612 596L668 600V630L612 635L558 624Z" fill="#090909" />
            <path d="M112 522L140 526M586 612L660 606M600 626L658 622" stroke="#303030" stroke-width="3" />
            <path d="M204 643L566 700V1055L204 997Z" fill="#2e2e2e" />
            <path d="M215 648L562 703V1040L215 983Z" fill="#080808" stroke="#000" stroke-width="2" />
            <path d="M84 1065L686 1163V1174L96 1076Z" fill="#333" />
            <path d="M84 1065L686 1163M84 1075L686 1174" stroke-width="6" />
          </g>
          <g stroke="#141414" stroke-width="1.500" stroke-linejoin="round">
            <path d="M1229 553L1311 504.500L1498.500 536L1415 583Q1315 572 1229 553Z" fill="#585858" />
            <path d="M1228.800 553Q1315 575 1415 583.500V875Q1320 868 1228.800 846Z" fill="url(#front)" />
            <path d="M1229 553Q1315 568 1415 580V583.500Q1315 576 1229 553Z" fill="#484848" />
            <path d="M1415 583L1498.500 536V828L1415 875Z" fill="#7e7e7e" />
          </g>
          <g>
            <circle r="1" transform="matrix(63.500 9 0 67.600 1315 696.300)" fill="#393939" stroke="#131313" stroke-width=".025" />
            <circle r="1" transform="matrix(47 6.600 0 50.800 1313.500 696)" fill="#111" />
            <circle r="1" transform="matrix(42.500 6 0 48 1318.500 693)" fill="#1e1e1e" />
          </g>

          <g transform="translate(1690 240) scale(.33333)" fill="#9797b0" stroke="#12121c" stroke-width="3.500" stroke-linejoin="round">
            <path d="M258 28L293 67H223ZM258 422L223 382H293ZM61 225L100 190V259ZM455 225L417 190V259Z" />
            <path d="M202 49Q166 58 136 90L120 86L109 131L152 118L143 104Q170 78 206 69ZM315 49Q352 60 381 90L398 86L405 131L363 118L374 104Q347 78 310 69Z" />
            <circle cx="430" cy="53" r="19" />
            <path d="M362 346L393 336L422 346V385L391 395L362 386ZM362 346L391 357L422 346M391 357V395" />
            <path d="M222 112L256 108L335 121L363 142L373 172V264L360 292L300 336L270 341L180 326L145 283V184L156 154Z" />
            <path d="M222 112L335 121L300 158L265 161L178 148ZM178 148L265 161V188L174 177ZM145 190L174 177L178 148M174 177L152 194V284L180 315L258 327L277 302V212L258 188M277 212H307L319 183L300 158M307 212V303H277M319 183L371 147M335 121L363 142M307 303L319 318L373 265M258 327L270 341M180 315V326M319 318L300 336" fill="none" stroke-width="3" />
            <path d="M117 190V334" stroke="#0000ff" stroke-width="5" /><path d="M122 335L191 296" stroke="#20ee30" stroke-width="6" /><path d="M160 283L177 305" stroke="#0a1a0a" stroke-width="5" /><path d="M118 337L254 358" stroke="#ff0000" stroke-width="5" />
            <g fill="#12121c" stroke-width=".8" font-family="Liberation Sans,Arial,sans-serif">
              <text transform="matrix(1 .12 0 1.150 158 258)" font-size="33" textLength="112" lengthAdjust="spacingAndGlyphs">FRENTE</text>
              <text transform="matrix(.5 -.25 0 1.150 313 270)" font-size="33" textLength="114" lengthAdjust="spacingAndGlyphs">DIREITA</text>
              <text transform="matrix(1 .13 -.6 .65 218 136)" font-size="28" textLength="76" lengthAdjust="spacingAndGlyphs">TOPO</text>
            </g>
          </g>
          <g font-family="Liberation Sans,Arial,sans-serif" font-size="10" fill="#000">
            <path d="M1811.500 940V922" stroke="#2a2aa0" stroke-width="1.300" /><path d="M1808.500 923.500L1811.500 914.500L1814.500 923.500Z" fill="#2424a4" />
            <path d="M1812 940L1816 938" stroke="#1a8a2a" /><ellipse cx="1818.500" cy="936.500" rx="3" ry="2.200" fill="#1f9a2f" transform="rotate(-25 1818.500 936.500)" />
            <path d="M1811.500 940.500L1828 943" stroke="#a52a34" stroke-width="1.300" /><path d="M1827.500 939.500L1837 944.500L1827 946Z" fill="#b02028" />
            <text x="1812.500" y="913.500" stroke="#000" stroke-width=".3">Z</text><text x="1821.500" y="934.500" stroke="#000" stroke-width=".3">Y</text><text x="1837" y="944.500" stroke="#000" stroke-width=".3">X</text>
          </g>
        </svg>
        <div class="docs">
          <div class="dt a"><svg viewBox="0 0 28 28" class="lg" v-html="icons.logo"></svg><span>Página inicial</span><svg class="x" viewBox="0 0 10 10"><path d="M1 1l8 8M9 1l-8 8" /></svg></div>
          <div class="dt b"><svg viewBox="0 0 28 28" class="lg" v-html="icons.logo"></svg><span>Concurso Curitiba_Final_R091_MOBILIARIO : 1*</span><svg class="x" viewBox="0 0 10 10"><path d="M1 1l8 8M9 1l-8 8" /></svg></div>
          <div class="rest"></div>
        </div>
      </section>
    </main>
  </div>
</template>

<style>
body { overflow: hidden; }
</style>
<style scoped>
* { box-sizing: border-box; }
.defs { position: absolute; }
.app { width: 1847px; height: 1016px; display: flex; flex-direction: column; background: #efefef; font: 15px "DejaVu Sans", sans-serif; color: #000; overflow: hidden; }
.app svg { flex: none; overflow: visible; }
.title { height: 40px; border-top: 3px solid #131313; border-bottom: 1px solid #b4b4b4; background: #ebebeb; display: flex; align-items: center; justify-content: center; flex: none; position: relative; }
.name { font: 700 16.500px "Noto Sans", sans-serif; letter-spacing: .85px; color: #3b3b3b; }
.winbtns { position: absolute; right: 6px; top: 7px; display: flex; gap: 12px; }
.winbtns svg { width: 22px; height: 22px; }
.winbtns circle { fill: #d9d9d9; }
.winbtns path { fill: none; stroke: #333; stroke-width: 1.300; }
.winbtns .thin { stroke-width: .8; }
.menu { height: 23px; flex: none; display: flex; align-items: center; padding-left: 1.300px; border-bottom: 1px solid #cfcfcf; }
.menu span { padding: 0 7.450px 0 8px; line-height: 22px; }
.menu u { text-underline-offset: 2px; text-decoration-thickness: 1px; }
.bar { height: 45px; flex: none; display: flex; align-items: center; background: linear-gradient(#f9f9f9, #eee); border-bottom: 1px solid #b7b7b7; }
.grip { width: 18px; height: 17px; flex: none; background: radial-gradient(circle, #aaa .7px, transparent 1px) 9px 0 / 3.500px 3.200px repeat; background-clip: content-box; padding: 0 5px 0 9px; }
.bar > .grip:first-child { width: 12.200px; padding: 0 5.200px 0 3px; background-position: 3px 0; }
.sep { width: 7.700px; height: 29px; flex: none; border-left: 1px solid #d0d0d0; margin-left: 4px; margin-right: -4px; }
.btn { width: 37px; height: 37px; margin: 0 1px; flex: none; display: flex; align-items: center; justify-content: center; border: 1px solid transparent; border-radius: 3px; }
.btn svg { width: 28px; height: 28px; }
.btn.on { background: #dadada; border-color: #b3b3b3; }
.cc { width: 15px; display: flex; padding-left: 2.500px; flex: none; }
.caret { border: 4.700px solid transparent; border-top: 5.500px solid #5c5c5c; border-bottom: 0; }
.caret.pale { border-top-color: #c6c6c6; }
.combo { width: 213px; height: 26px; margin-right: 1px; border: 1px solid #adadad; border-radius: 3px; background: linear-gradient(#fefefe, #f3f3f3); display: flex; align-items: center; flex: none; padding: 0 9px 0 6px; }
.combo .i16 { width: 16px; height: 16px; margin-right: 3px; }
.combo span { flex: 1; }
.tray { width: 354.500px; display: flex; align-items: center; flex: none; padding-left: 1px; }
.tbtn { height: 27px; border: 1px solid #b0b0b0; border-radius: 3px; background: linear-gradient(#fff, #f5f5f5); display: flex; align-items: center; margin-right: 2px; white-space: nowrap; }
.topo { width: 79px; padding-left: 9px; }
.topo svg { width: 20px; height: 19px; margin-right: 3px; }
.px { width: 142px; padding-left: 5px; }
.sw { width: 16px; height: 16px; margin-right: 5px; }
.dir { width: 19px; height: 16px; margin: 0 11px 0 5px; }
.non { width: 18px; height: 18px; margin-right: 4px; }

main { flex: 1; display: flex; min-height: 0; }
aside { width: 656px; flex: none; display: flex; flex-direction: column; }
.dock { height: 20px; flex: none; display: flex; justify-content: space-between; align-items: center; padding: 0 2px; }
.dock span { margin-top: -1px; }
.dbtns { display: flex; gap: 3px; }
.dbtns svg { width: 11px; height: 11px; fill: none; stroke: #555; }
.tabs { height: 31px; display: flex; align-items: flex-end; flex: none; }
.tab { height: 29px; width: 83px; display: flex; align-items: center; justify-content: center; border: 1px solid #b0b0b0; border-bottom: 0; background: #e6e6e6; border-radius: 2px 2px 0 0; border-left: 0; }
.tab.act { width: 84px; background: #fafafa; margin-bottom: -1px; position: relative; padding: 0 2px 2px 0; height: 32px; }
.page { flex: 1; min-height: 0; border-top: 1px solid #b0b0b0; border-right: 1px solid #b0b0b0; border-bottom: 1px solid #b0b0b0; background: #fafafa; display: flex; flex-direction: column; padding: 1px 1px 0 0; }
.tree { height: 537px; border: 1px solid #b0b0b0; border-bottom: 0; background: #fff; display: flex; flex: none; overflow: hidden; }
.rows { flex: 1; }
.row { height: 22px; display: flex; align-items: center; padding-left: 106.500px; white-space: nowrap; }
.lv1 { padding-left: 131.500px; }
.lv2 { padding-left: 156.500px; }
.lv3 { padding-left: 181.500px; }
.row svg { width: 18px; height: 18px; margin: 0 5px 0 11.500px; }
.row svg.gray { filter: grayscale(1) brightness(1.300); }
.off { color: #bebebe; }
.lab { padding: 0 2.500px 1px 2px; height: 22px; line-height: 20px; border: 1px solid transparent; border-right: 0; margin-left: -1px; }
.sel .lab { flex: 1; background: linear-gradient(#eaf5fc, #e2ecf4); border-color: #a4c6de; }
.arr { width: 11px; height: 11px; display: flex; flex: none; }
.arr::before { content: ""; margin: auto; }
.arr.d::before { border: 4.700px solid transparent; border-top: 6px solid #505050; border-bottom: 0; }
.arr.r::before { border: 4.700px solid transparent; border-left: 6px solid #505050; border-right: 0; }
.vsb { width: 18px; border-left: 1px solid #b0b0b0; border-right: 1px solid #b0b0b0; display: flex; flex-direction: column; flex: none; }
.vsb b, .hsb b { display: flex; flex: none; }
.sb { height: 16px; background: #fafafa; border-bottom: 1px solid #b0b0b0; }
.sb.bt { border: 0; border-top: 1px solid #b0b0b0; height: 17px; }
.sb i, .hb i { margin: auto; }
.au { border: 4.500px solid transparent; border-bottom: 5.500px solid #555; border-top: 0; }
.ad { border: 4.500px solid transparent; border-top: 5.500px solid #555; border-bottom: 0; }
.al { border: 4.500px solid transparent; border-right: 5.500px solid #555; border-left: 0; }
.ar { border: 4.500px solid transparent; border-left: 5.500px solid #555; border-right: 0; }
.vt1 { height: 176px; background: #e1e1e1; }
.vh { height: 202px; background: #fafafa; border: solid #b0b0b0; border-width: 1px 0; }
.vsb .vt2 { flex: 1; background: #e1e1e1; }
.hsb { height: 18px; border: 1px solid #b0b0b0; display: flex; flex: none; }
.hb { width: 17px; background: #fafafa; border-right: 1px solid #b0b0b0; }
.hb.lf { border-left: 1px solid #b0b0b0; }
.hh { width: 345px; background: linear-gradient(#fdfdfd, #f3f3f3); border-right: 1px solid #b0b0b0; }
.hsb .ht { flex: 1; background: #e1e1e1; }
.corner { width: 16px; background: #efefef; }
.split { height: 5px; flex: none; background: radial-gradient(circle, #aaa .6px, transparent .9px) 0 1px / 3px 3px repeat-x; margin: 0 318px 0 319px; }
.props { height: 128px; border: 1px solid #a9a9a9; padding: 1px; flex: none; background: #fdfdfd; }
.inner { height: 124px; border: 1px solid #b4b4b4; background: #fff; }
.hd { height: 22px; background: linear-gradient(#fdfdfd, #ebebeb); border-bottom: 1px solid #a9a9a9; display: flex; }
.hd span { padding-left: 2px; line-height: 21px; }
.hd .c1 { width: 125px; border-right: 1px solid #c0c0c0; }
.btabs { display: flex; align-items: flex-start; }
.bt1 { width: 68px; height: 30px; margin-top: -1px; background: #fdfdfd; border: 1px solid #b0b0b0; border-top: 0; border-radius: 0 0 3px 3px; text-align: center; line-height: 30px; padding-right: 2px; }
.bt2 { width: 77px; height: 28px; background: #e6e6e6; border: 1px solid #b0b0b0; border-width: 0 1px 1px 0; border-radius: 0 0 3px 0; text-align: center; line-height: 27px; }
.vsplit { width: 7px; display: flex; align-items: center; }
.vsplit i { width: 2px; height: 18px; margin: 0 auto; background: radial-gradient(circle, #aaa .6px, transparent .9px) 0 0 / 2px 3px repeat-y; }
section { width: 1184px; display: flex; flex-direction: column; }
.view { display: block; }
.docs { display: flex; flex: 1; align-items: flex-start; border-top: 1px solid #f2f2f2; }
.dt { display: flex; align-items: center; white-space: nowrap; }
.a { width: 183px; height: 36px; background: #dadada; border: 1px solid #b3b3b3; border-radius: 0 0 3px 3px; padding-left: 13px; }
.b { width: 433px; height: 37px; background: linear-gradient(#efefef, #fbfbfb); border: 1px solid #b3b3b3; border-top: 0; border-left: 0; border-radius: 0 0 3px 3px; padding: 1px 0 0 14px; }
.lg { width: 19px; height: 20px; margin-right: 5.500px; }
.x { width: 10px; height: 10px; margin-left: 10.500px; stroke: #8b8b8b; stroke-width: 2.600; }
.rest { flex: 1; border-top: 1px solid #b3b3b3; }
</style>
